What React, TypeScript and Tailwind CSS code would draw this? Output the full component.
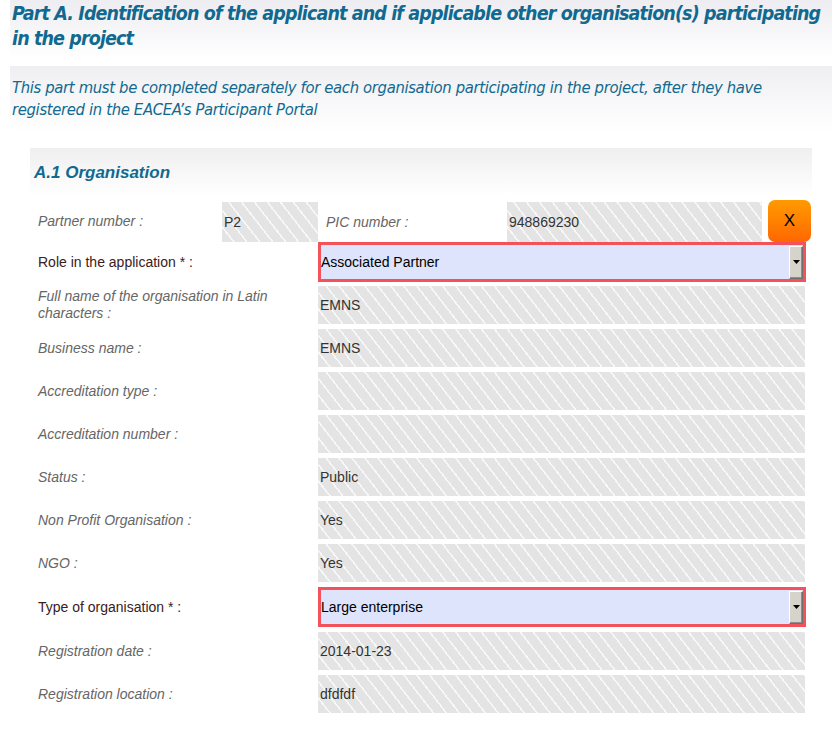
const hatch =
  "bg-[#e4e4e4] bg-[repeating-linear-gradient(52deg,#e4e4e4_0px,#e4e4e4_8.6px,#f8f8f8_8.6px,#f8f8f8_10.2px)]";

function Field({ value, className = "" }: { value?: string; className?: string }) {
  return (
    <div className={`${hatch} flex items-center pl-[2px] text-[14px] text-[#333] ${className}`}>
      {value}
    </div>
  );
}

function Select({ value }: { value: string }) {
  return (
    <div className="flex h-[40px] w-[488px] items-center border-[3px] border-[#f4525b] bg-[#dde4fb] text-[14px] text-black">
      <span className="flex-1">{value}</span>
      <div className="flex h-[33px] w-[14px] items-center justify-center border border-[#6f6f6f] border-t-white border-l-white bg-[#d6d3cb] shadow-[inset_-1px_-1px_0_#8d8d8d]">
        <svg width="7" height="4" viewBox="0 0 7 4">
          <path d="M0 0h7L3.5 4z" fill="#000" />
        </svg>
      </div>
    </div>
  );
}

type Row = { label: string; value?: string; select?: boolean; strong?: boolean };

const rows: Row[] = [
  { label: "Full name of the organisation in Latin characters :", value: "EMNS" },
  { label: "Business name :", value: "EMNS" },
  { label: "Accreditation type :" },
  { label: "Accreditation number :" },
  { label: "Status :", value: "Public" },
  { label: "Non Profit Organisation :", value: "Yes" },
  { label: "NGO :", value: "Yes" },
  { label: "Type of organisation * :", value: "Large enterprise", select: true, strong: true },
  { label: "Registration date :", value: "2014-01-23" },
  { label: "Registration location :", value: "dfdfdf" },
];

function Label({ text, strong }: { text: string; strong?: boolean }) {
  return (
    <div
      className={`w-[280px] pr-[20px] text-[14px] leading-[17px] ${
        strong ? "text-[#3a2020]" : "italic text-[#666]"
      }`}
    >
      {text}
    </div>
  );
}

export default function App() {
  return (
    <div className="w-[832px] overflow-hidden bg-white pb-[23px] font-['Liberation_Sans',Arial,sans-serif]">
      <div className="ml-[10px] h-[58px] bg-gradient-to-b from-[#ededf2] to-white pl-[2px] pt-[1px]">
        <h1 className="font-['DejaVu_Sans_Condensed',sans-serif] text-[19.5px] leading-[25px] font-bold italic tracking-[-0.88px] text-[#11698f]">
          Part A. Identification of the applicant and if applicable other organisation(s) participating in the project
        </h1>
      </div>
      <div className="ml-[10px] mt-[8px] h-[66px] bg-gradient-to-b from-[#efeff3] to-white pl-[2px] pt-[11px]">
        <p className="font-['DejaVu_Sans_Condensed',sans-serif] text-[16.5px] leading-[22px] italic tracking-[-0.35px] text-[#11698f]">
          This part must be completed separately for each organisation participating in the project, after they have registered in the EACEA’s Participant Portal
        </p>
      </div>

      <div className="ml-[30px] mt-[16px] w-[782px]">
        <div className="flex h-[47px] items-center bg-gradient-to-b from-[#efefef] to-white pl-[4px] pt-[2px]">
          <h2 className="text-[17px] font-bold italic text-[#11698f]">A.1 Organisation</h2>
        </div>

        <div className="mt-[5px] pl-[8px]">
          <div className="flex items-stretch">
            <div className="flex w-[184px] items-center text-[14px] italic text-[#666]">Partner number :</div>
            <Field value="P2" className="mt-[2px] h-[40px] w-[96px]" />
            <div className="mt-[2px] flex w-[189px] items-center pl-[8px] text-[14px] italic text-[#666]">PIC number :</div>
            <Field value="948869230" className="mt-[2px] h-[40px] w-[255px]" />
            <button className="ml-[6px] flex h-[42px] w-[43px] items-center justify-center rounded-[7px] bg-gradient-to-b from-[#ff9a00] to-[#ff6600] text-[17px] text-black">
              X
            </button>
          </div>

          <div className="flex items-center">
            <Label text="Role in the application * :" strong />
            <Select value="Associated Partner" />
          </div>

          <div className="mt-[4px] flex flex-col gap-[5px]">
            {rows.map((r) => (
              <div key={r.label} className="flex items-center">
                <Label text={r.label} strong={r.strong} />
                {r.select ? (
                  <Select value={r.value ?? ""} />
                ) : (
                  <Field value={r.value} className="h-[38px] w-[487px]" />
                )}
              </div>
            ))}
          </div>
        </div>
      </div>
    </div>
  );
}
